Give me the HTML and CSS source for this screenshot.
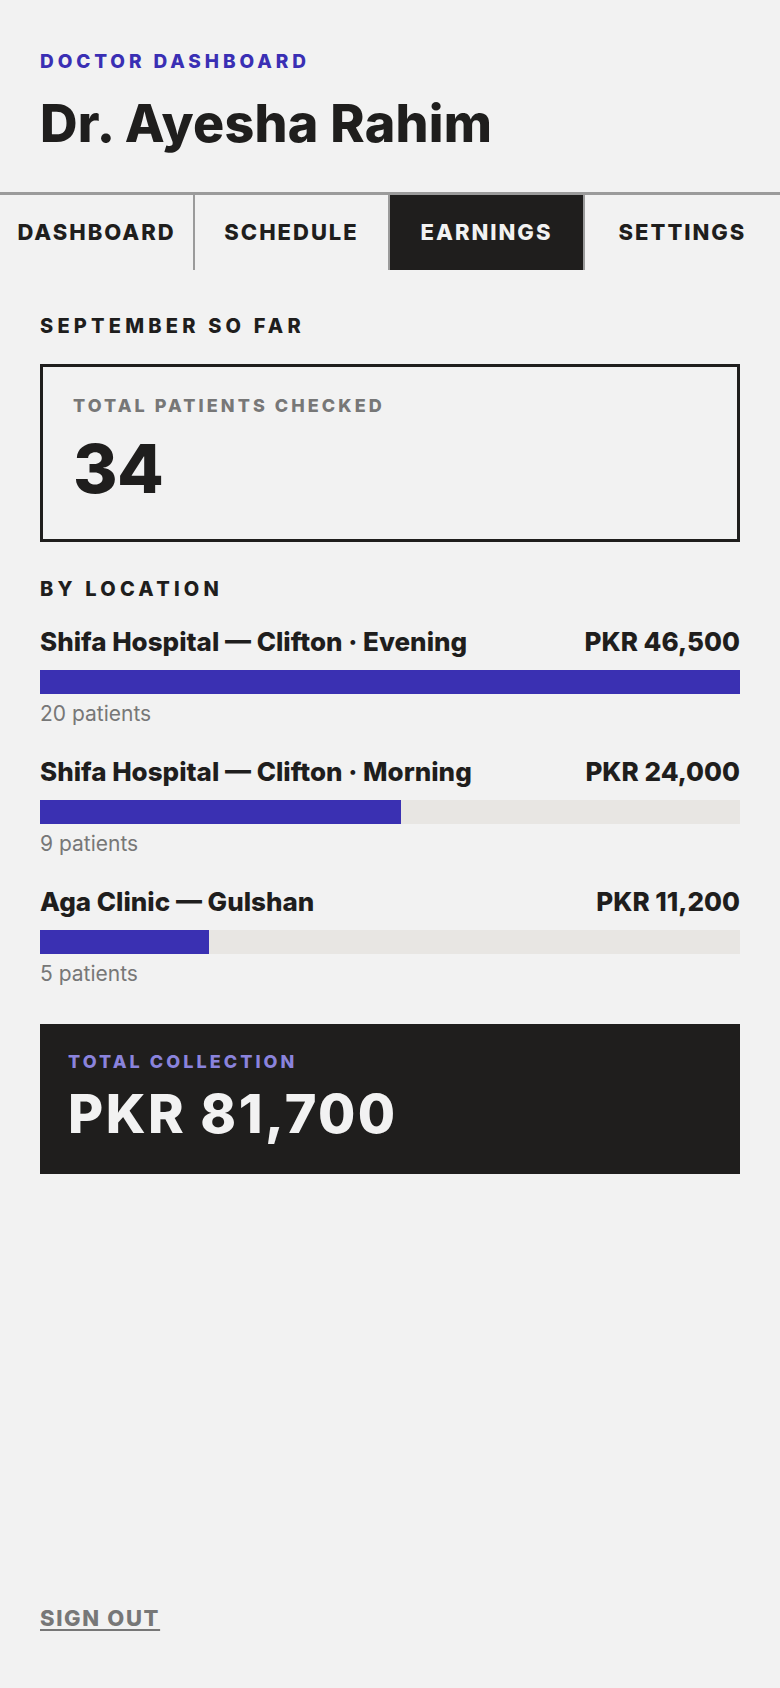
FILE: index.html
```html
<!DOCTYPE html>
<html lang="en">
<head>
    <meta charset="UTF-8">
    <meta name="viewport" content="width=device-width, initial-scale=1.0">
    <title>Doctor Dashboard - Earnings</title>
    <link rel="stylesheet" href="styles.css">
</head>
<body>
<div class="page">
    <header class="header">
        <div class="eyebrow">Doctor Dashboard</div>
        <h1 class="name">Dr. Ayesha Rahim</h1>
    </header>

    <nav class="tabs">
        <a href="#" class="tab">Dashboard</a>
        <a href="#" class="tab">Schedule</a>
        <a href="#" class="tab active">Earnings</a>
        <a href="#" class="tab">Settings</a>
    </nav>

    <main class="content">
        <h2 class="section-title">September so far</h2>

        <div class="stat-card">
            <div class="stat-label">Total patients checked</div>
            <div class="stat-value">34</div>
        </div>

        <h2 class="section-title section-title--spaced">By location</h2>

        <div class="location">
            <div class="location-head">
                <span>Shifa Hospital — Clifton · Evening</span>
                <span>PKR 46,500</span>
            </div>
            <div class="bar"><div class="bar-fill" style="width: 100%"></div></div>
            <div class="location-count">20 patients</div>
        </div>

        <div class="location">
            <div class="location-head">
                <span>Shifa Hospital — Clifton · Morning</span>
                <span>PKR 24,000</span>
            </div>
            <div class="bar"><div class="bar-fill" style="width: 51.6%"></div></div>
            <div class="location-count">9 patients</div>
        </div>

        <div class="location">
            <div class="location-head">
                <span>Aga Clinic — Gulshan</span>
                <span>PKR 11,200</span>
            </div>
            <div class="bar"><div class="bar-fill" style="width: 24.1%"></div></div>
            <div class="location-count">5 patients</div>
        </div>

        <div class="total">
            <div class="total-label">Total collection</div>
            <div class="total-value">PKR 81,700</div>
        </div>
    </main>

    <footer class="footer">
        <a href="#" class="signout">Sign out</a>
    </footer>
</div>
</body>
</html>
```

FILE: styles.css
```css
* {
    box-sizing: border-box;
}

body {
    margin: 0;
    background-color: #f2f2f2;
    color: #1f1e1d;
    font-family: Inter, "Noto Sans", sans-serif;
}

.page {
    min-height: 100vh;
    display: flex;
    flex-direction: column;
}

.header {
    padding: 50px 40px 38px;
}

.eyebrow {
    font-size: 19px;
    line-height: 24px;
    font-weight: 800;
    letter-spacing: 0.205em;
    text-transform: uppercase;
    color: #3a2fb4;
}

.name {
    margin: 20px 0 0;
    font-size: 52px;
    line-height: 60px;
    font-weight: 800;
    letter-spacing: 0.005em;
}

.tabs {
    display: grid;
    grid-template-columns: repeat(4, 1fr);
    border-top: 3px solid #9b9b9b;
}

.tab {
    padding: 24px 0 25px;
    text-align: center;
    font-size: 22px;
    line-height: 26px;
    font-weight: 800;
    letter-spacing: 0.09em;
    text-transform: uppercase;
    color: #1f1e1d;
    text-decoration: none;
    border-right: 2px solid #9b9b9b;
}

.tab:last-child {
    border-right: none;
}

.tab.active {
    background-color: #1f1e1d;
    color: #f2f2f2;
}

.content {
    padding: 44px 40px 0;
}

.section-title {
    margin: 0;
    font-size: 20px;
    line-height: 24px;
    font-weight: 800;
    letter-spacing: 0.21em;
    text-transform: uppercase;
}

.section-title--spaced {
    margin-top: 35px;
}

.stat-card {
    margin-top: 26px;
    border: 3px solid #1f1e1d;
    padding: 28px 30px 35px;
}

.stat-label {
    font-size: 18px;
    line-height: 22px;
    font-weight: 800;
    letter-spacing: 0.17em;
    text-transform: uppercase;
    color: #777;
}

.stat-value {
    margin-top: 15px;
    font-size: 68px;
    line-height: 72px;
    font-weight: 800;
    letter-spacing: -0.01em;
}

.location {
    margin-top: 26px;
}

.location + .location {
    margin-top: 31px;
}

.location-head {
    display: flex;
    justify-content: space-between;
    font-size: 26px;
    line-height: 30px;
    font-weight: 800;
}

.bar {
    margin-top: 13px;
    height: 24px;
    background-color: #e8e6e3;
}

.bar-fill {
    height: 100%;
    background-color: #3a30b2;
}

.location-count {
    margin-top: 8px;
    font-size: 21px;
    line-height: 24px;
    color: #777;
}

.total {
    margin-top: 38px;
    background-color: #1f1e1d;
    padding: 27px 28px 30px;
}

.total-label {
    font-size: 18px;
    line-height: 22px;
    font-weight: 800;
    letter-spacing: 0.17em;
    text-transform: uppercase;
    color: #8a83dc;
}

.total-value {
    margin-top: 11px;
    font-size: 54px;
    line-height: 60px;
    font-weight: 800;
    letter-spacing: 0.045em;
    color: #f2f2f2;
}

.footer {
    margin-top: auto;
    padding: 0 40px 57px;
}

.signout {
    font-size: 22px;
    line-height: 26px;
    font-weight: 800;
    letter-spacing: 0.075em;
    text-transform: uppercase;
    color: #777;
    text-decoration: underline;
    text-underline-offset: 3px;
}
```
